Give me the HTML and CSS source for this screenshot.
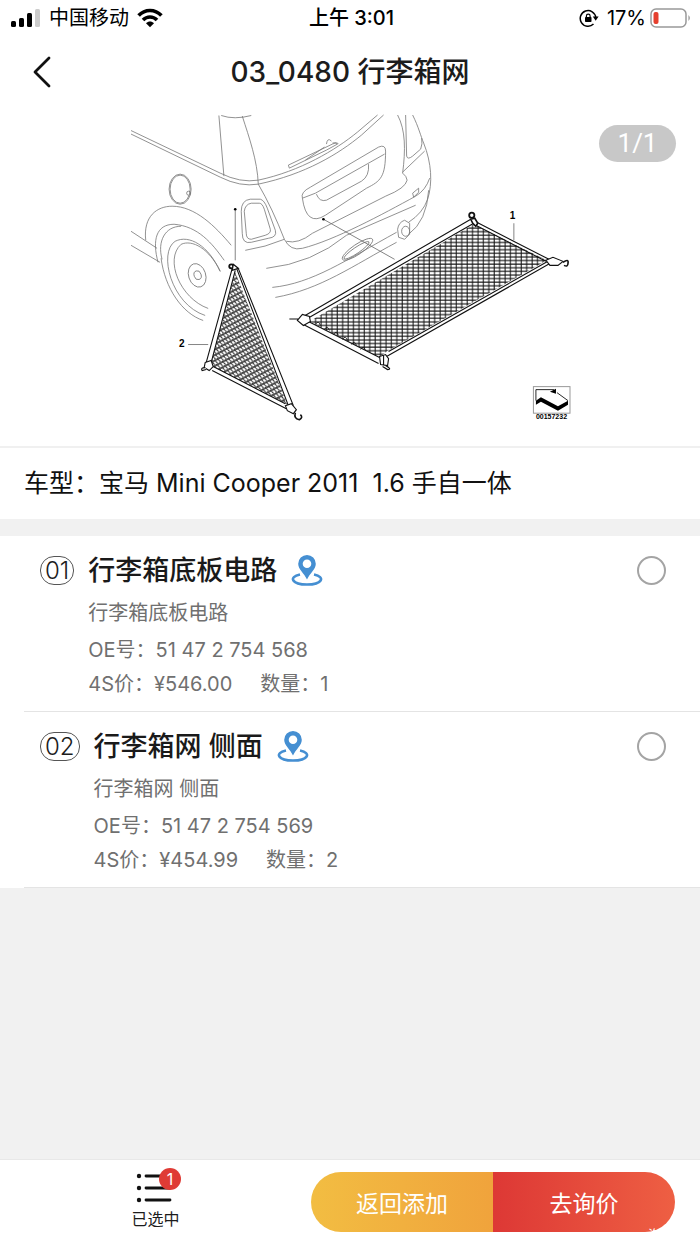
FILE: index.html
```html
<!DOCTYPE html>
<html lang="zh-CN">
<head>
<meta charset="utf-8">
<meta name="viewport" content="width=device-width, initial-scale=1">
<title>03_0480 行李箱网</title>
<link rel="stylesheet" href="styles.css">
</head>
<body>
<div class="status">
  <div class="status-left">
    <svg class="signal" viewBox="0 0 30 20" aria-hidden="true"><rect x="0" y="13" width="5" height="6" rx="1.5"/><rect x="8" y="10" width="5" height="9" rx="1.5"/><rect x="16" y="5" width="5" height="14" rx="1.5"/><rect x="24" y="1" width="5" height="18" rx="1.5" fill="#ccc"/></svg>
    <span>中国移动</span>
    <svg class="wifi" viewBox="0 0 26 20" aria-hidden="true"><g fill="none" stroke="#000" stroke-width="3.6"><path d="M1.6 7.6C8 .8 18 .8 24.400 7.600"/><path d="M6 12C10 8 16 8 20 12"/></g><path d="M9 15.200c2.500-2.200 5.500-2.200 8 0l-4 4z"/></svg>
  </div>
  <div class="status-time">上午 3:01</div>
  <div class="status-right">
    <svg class="lock" viewBox="0 0 20 18" aria-hidden="true"><path d="M14.500 15A7.800 7.800 0 1 1 16.800 8.500" fill="none" stroke="#000" stroke-width="1.500"/><path d="M13.800 7.500h5.800l-2.900 4.200z"/><rect x="6" y="8" width="6.500" height="5" rx=".8"/><path d="M7.400 8.500V7a1.850 1.850 0 0 1 3.700 0v1.500" fill="none" stroke="#000" stroke-width="1.200"/></svg>
    <span>17%</span>
    <svg class="battery" viewBox="0 0 42 20" aria-hidden="true"><rect x="1" y="1" width="35" height="18" rx="5" fill="#fff" stroke="#999" stroke-width="1.500"/><rect x="3.500" y="4" width="5" height="12" rx="2" fill="#e5402f"/><path d="M38.500 7q2.500 3 0 6z" fill="#888"/></svg>
  </div>
</div>
<header class="nav">
  <button class="back" type="button" aria-label="返回"><svg viewBox="0 0 18 32" aria-hidden="true"><path d="M16 2L2 16l14 14" fill="none" stroke="#111" stroke-width="2.800" stroke-linecap="round" stroke-linejoin="round"/></svg></button>
  <h1>03_0480 行李箱网</h1>
</header>
<main>
  <section class="figure">
    <svg class="diagram" viewBox="130 112 440 310" role="img" aria-label="行李箱网">
      <defs>
        <pattern id="mesh" width="5.4" height="3.6" patternUnits="userSpaceOnUse"><path d="M0 1H5.400M2 0V3.600" stroke="#111" stroke-width="1"/></pattern>
        <pattern id="mesh2" width="3.200" height="4.800" patternUnits="userSpaceOnUse" patternTransform="rotate(-28)"><path d="M0 1H3.200" stroke="#111" stroke-width="1.300"/><path d="M1 0L2.600 4.800" stroke="#333" stroke-width="1"/></pattern>
      </defs>
      <g fill="none" stroke="#777" stroke-width=".8">
        <path d="M218.700 115.500L223.700 176M221 115.500Q234 120 251 115.500M242 116C249 138 257 160 258 184"/>
        <path d="M131 130.500L220 173Q240 183 258 180C300 171 335 150 357 132L377 115"/>
        <path d="M131 134L220 177Q240 187 258 184C305 174 338 154 361 135L383 115"/>
        <ellipse cx="180" cy="189" rx="11" ry="15"/><ellipse cx="180" cy="189" rx="10" ry="14"/><circle cx="188.500" cy="193" r="2"/>
        <path d="M145.700 240C143 216 157 206 172 206C195 206 215 226 231 245"/>
        <path d="M158 262C152 240 156 224 174 224C198 226 212 243 224 260M162 259C157 241 165 226 181 226"/>
        <path d="M131 231L157 248M131 245L160 262"/>
        <path d="M161 258C165 288 182 313 203 320"/>
        <path d="M220 271C208 245 189 234 175 241C158 252 171 304 205 315"/>
        <path d="M220 271C209 248 192 239 181 244C164 259 180 298 208 308"/>
        <ellipse cx="197" cy="275" rx="8.500" ry="12" transform="rotate(-18 197 275)"/><ellipse cx="197.500" cy="275" rx="3.500" ry="4.500" transform="rotate(-18 197 275)"/>
        <path d="M258 184Q272 208 284 239Q290 251 302 248C334 240 382 214 415 196Q425 190 429 178"/>
        <path d="M286 241Q298 244 312 233L385 196Q405 188 406.500 180Q406 176 402 173"/>
        <path d="M245 250Q265 247 284 239M266 268Q312 263 346 235L415 205M272 287C312 283 345 260 396 232M275 297C320 289 353 265 396 242M408 234Q426 221 428 190"/>
        <path d="M397 115C405 130 405 150 402 173M405 115L406 156Q407 160 412 156L420 149Q422 144 421 138M412 115C418 127 420 136 423 143C431 163 432 183 427 199Q422 213 408 222M402 172L424 151"/>
        <path d="M302 198Q300 192 310 187L378 147Q385 144 385 151C385 177 380 181 366 188L325 215Q306 227 302 198ZM302 198L315 193L384 154M316 194Q319 202 326 200L361 181Q369 176 368 164"/>
        <path d="M288 165L332 144Q335 142 337 144L326 150L289 168ZM305 160L324 147M326 144Q327 137 331 141M332 143Q337 142 338 144"/>
        <path d="M397 229Q398 222 404 220L409 223V234L404 239L398 237Z"/><ellipse cx="405" cy="231" rx="4" ry="5"/>
        <ellipse cx="357" cy="249" rx="18" ry="5" transform="rotate(-34 357 249)"/><ellipse cx="356" cy="250" rx="15" ry="3" transform="rotate(-34 356 250)"/>
        <path d="M412 193L418 188V192L413 197Z"/>
        <path d="M241 211Q241 200 250 199H260Q264 200 267 208L275 230Q277 237 268 238L251 242Q242 244 242 233Z"/>
        <path d="M244 211Q245 204 251 203H259Q262 203 264 209L270 229Q271 233 265 235L251 239Q246 239 246 233Z"/>
      </g>
      <path d="M235 209V260M323 219L394 259M513 223V240M188 344H208" fill="none" stroke="#666" stroke-width=".8"/>
      <circle cx="235" cy="209" r="1.300"/><circle cx="323" cy="219" r="1.300"/>
      <path d="M473 224L546 260L386 351L379 357L309 321Z" fill="url(#mesh)"/>
      <path d="M235 272L287 404L213 366L211 362Z" fill="url(#mesh2)"/>
      <g fill="none" stroke="#111" stroke-width="1.100">
        <path d="M303 316L470 219M307 318L473 223M476 222L548 259M475 225L545 261M547 261L388 351M551 262L386 356M308 321L379 357M303 324L378 363"/>
        <path d="M315 324q3-5 5 1m4 4q3-5 5 1m4 4q3-5 5 1m4 4q3-5 5 1m4 4q3-5 5 1m4 4q3-5 5 1" stroke-width=".8"/>
        <path d="M232 268L206 362M235 270L211 362M236 267L288 405M238 268L293 405M213 366L285 403M212 370L286 408"/>
      </g>
      <g fill="#fff" stroke="#111" stroke-width="1.100">
        <path d="M289 318.500H298M297 320L302 314L309 316L310 321L303 325Z"/>
        <path d="M379 356L385 354L388 358L387 365L380 364ZM383 355V364M385 365Q392 369 387 369L382 366"/>
        <path d="M545 260L552 257L562 261L557 265L549 265Z"/><path d="M562 262Q568 258 567 263Q567 267 563 265" stroke-width="1.600"/>
        <circle cx="471" cy="215" r="2.600" stroke-width="1.800"/><path d="M470 219L474 218L477 223L475 226L472 223Z" stroke-width="1.600"/>
        <circle cx="231" cy="266" r="2" stroke-width="1.800"/><path d="M233 264L238 268L232 270Z" stroke-width="1.300"/>
        <path d="M205 362L211 360L213 366L209 370L204 367Z"/><path d="M205 367Q200 367 202 370L206 369"/>
        <path d="M285 405L291 403L296 409L293 413L287 410Z"/><path d="M295 412Q293 418 299 419Q303 417 300 414" stroke-width="1.600"/>
      </g>
      <rect x="532.500" y="386" width="36.500" height="26.500" fill="#fff" stroke="#999"/>
      <path d="M535 400V389H553M556 392L567 400" fill="none" stroke="#111" stroke-width=".9"/>
      <path d="M549 391L555 388V393ZM535 400L540 396.500L557 405.500L567 400V404L557 410L540 401L535 404Z"/>
      <text class="callout" x="509" y="219">1</text><text class="callout" x="179" y="346">2</text><text class="serial" x="535" y="418">00157232</text>
    </svg>
    <span class="counter">1/1</span>
  </section>
  <p class="model">车型：宝马 Mini Cooper 2011 &nbsp;1.6 手自一体</p>
  <ul class="parts">
    <li class="part">
      <span class="num">01</span>
      <div class="info">
        <h2><label for="p1">行李箱底板电路</label><svg class="pin" viewBox="0 0 32 32" aria-hidden="true"><path d="M9 19.500C-3 22 1 29.500 16 29.500S35 22 23 19.500" fill="none" stroke="#458fd2" stroke-width="2.600"/><path fill="#458fd2" fill-rule="evenodd" d="M16 0a8.800 8.800 0 0 1 8.800 8.800C24.800 14.500 19 18 16 24.500C13 18 7.200 14.500 7.200 8.800A8.800 8.800 0 0 1 16 0zM16 4.500a4.300 4.300 0 1 0 0 8.600A4.300 4.300 0 0 0 16 4.500z"/></svg></h2>
        <p class="name">行李箱底板电路</p>
        <p class="oe">OE号：51 47 2 754 568</p>
        <p class="price"><span>4S价：¥546.00</span><span>数量：1</span></p>
      </div>
      <input class="pick" type="checkbox" id="p1">
    </li>
    <li class="part">
      <span class="num">02</span>
      <div class="info">
        <h2><label for="p2">行李箱网 侧面</label><svg class="pin" viewBox="0 0 32 32" aria-hidden="true"><path d="M9 19.500C-3 22 1 29.500 16 29.500S35 22 23 19.500" fill="none" stroke="#458fd2" stroke-width="2.600"/><path fill="#458fd2" fill-rule="evenodd" d="M16 0a8.800 8.800 0 0 1 8.800 8.800C24.800 14.500 19 18 16 24.500C13 18 7.200 14.500 7.200 8.800A8.800 8.800 0 0 1 16 0zM16 4.500a4.300 4.300 0 1 0 0 8.600A4.300 4.300 0 0 0 16 4.500z"/></svg></h2>
        <p class="name">行李箱网 侧面</p>
        <p class="oe">OE号：51 47 2 754 569</p>
        <p class="price"><span>4S价：¥454.99</span><span>数量：2</span></p>
      </div>
      <input class="pick" type="checkbox" id="p2">
    </li>
  </ul>
</main>
<footer class="bar">
  <button class="chosen" type="button">
    <span class="list-icon"><svg viewBox="0 0 36 30" aria-hidden="true"><g fill="#111"><circle cx="3" cy="3" r="2.200"/><circle cx="3" cy="15" r="2.200"/><circle cx="3" cy="27" r="2.200"/></g><path d="M10 3H34M10 15H34M10 27H34" stroke="#111" stroke-width="2.800" stroke-linecap="round"/></svg><span class="badge">1</span></span>
    <span>已选中</span>
  </button>
  <div class="actions">
    <button class="add" type="button">返回添加</button><button class="ask" type="button">去询价</button>
    <span class="mark" aria-hidden="true">汽</span>
  </div>
</footer>
</body>
</html>
```
FILE: styles.css
```css
* { box-sizing: border-box; }
body, h1, h2, p, ul { margin: 0; padding: 0; }
body {
  min-height: 100vh;
  display: flex;
  flex-direction: column;
  background: #f1f1f1;
  color: #1c1c1c;
  font-family: Inter, "Noto Sans CJK SC", sans-serif;
}
button { border: 0; padding: 0; background: none; color: inherit; font-family: inherit; }
svg { display: block; }

.status {
  display: grid;
  grid-template-columns: 1fr auto 1fr;
  align-items: center;
  height: 36px;
  padding: 0 8px 0 11px;
  background: #fff;
  color: #000;
  font-size: 20px;
  line-height: 36px;
}
.status-left, .status-right { display: flex; align-items: center; }
.status-left { gap: 8px; }
.status-right { justify-content: flex-end; gap: 4px; }
.status-time { font-weight: 500; }
.signal { width: 30px; height: 20px; }
.wifi { width: 26px; height: 20px; }
.lock { width: 20px; height: 18px; margin-right: 4px; }
.battery { width: 42px; height: 20px; }

.nav {
  display: grid;
  grid-template-columns: 60px 1fr 60px;
  align-items: center;
  height: 72px;
  background: #fff;
}
.back { padding-left: 33px; }
.back svg { width: 18px; height: 32px; }
.nav h1 { font-size: 28px; line-height: 40px; font-weight: 500; text-align: center; white-space: nowrap; }

.figure { position: relative; padding: 4px 0 23px; background: #fff; border-bottom: 2px solid #f0f0f0; }
.diagram { width: 63%; margin: 0 auto; }
.callout { font: bold 10px "Liberation Sans", sans-serif; }
.serial { font: bold 7px "Liberation Sans", sans-serif; }
.counter {
  position: absolute;
  top: 17px;
  right: 24px;
  width: 77px;
  border-radius: 19px;
  background: #c8c8c8;
  color: #fff;
  font-family: Roboto, sans-serif;
  font-size: 26px;
  line-height: 37px;
  text-align: center;
}
.model { padding: 17px 24px 18px; background: #fff; font-size: 25px; line-height: 36px; color: #111; }

.parts { margin-top: 17px; background: #fff; list-style: none; }
.part {
  display: flex;
  align-items: flex-start;
  gap: 14px;
  margin-left: 24px;
  padding: 16px 34px 10px 16px;
  border-bottom: 1px solid #e4e4e4;
}
.num {
  margin-top: 4px;
  padding: 0 4px;
  border: 1px solid #555;
  border-radius: 14px;
  font-size: 24px;
  line-height: 27px;
  font-weight: 300;
}
.info { flex: 1; color: #707070; font-size: 20px; }
.info h2 { display: flex; align-items: center; gap: 14px; color: #1a1a1a; font-size: 27px; line-height: 38px; font-weight: 500; }
.pin { width: 32px; height: 32px; }
.name { margin-top: 6px; line-height: 34px; }
.oe { margin-top: 3px; line-height: 34px; }
.price { display: flex; gap: 28px; line-height: 34px; }
.pick {
  appearance: none;
  width: 29px;
  height: 29px;
  margin: 4px 0 0;
  border: 2px solid #a4a4a4;
  border-radius: 50%;
}

.bar {
  display: flex;
  align-items: center;
  margin-top: auto;
  height: 85px;
  padding-right: 25px;
  background: #fff;
  border-top: 1px solid #e8e8e8;
}
.chosen { flex: 311; display: flex; flex-direction: column; align-items: center; gap: 4px; font-size: 16px; line-height: 24px; }
.list-icon { position: relative; margin-right: 3px; }
.list-icon svg { width: 36px; height: 30px; }
.badge {
  position: absolute;
  top: -5px;
  right: -9px;
  width: 22px;
  border-radius: 11px;
  background: #df3b35;
  color: #fff;
  font-size: 16px;
  line-height: 22px;
}
.actions { position: relative; flex: 364; display: flex; }
.actions button { flex: 1; height: 60px; color: #fff; font-size: 23px; }
.add { border-radius: 30px 0 0 30px; background: linear-gradient(90deg, #f2bd42, #f0a33c); }
.ask { border-radius: 0 30px 30px 0; background: linear-gradient(90deg, #dd3835, #ee5f43); }
.mark { position: absolute; right: 14px; bottom: -9px; color: #fff; font-size: 13px; line-height: 14px; }
```
